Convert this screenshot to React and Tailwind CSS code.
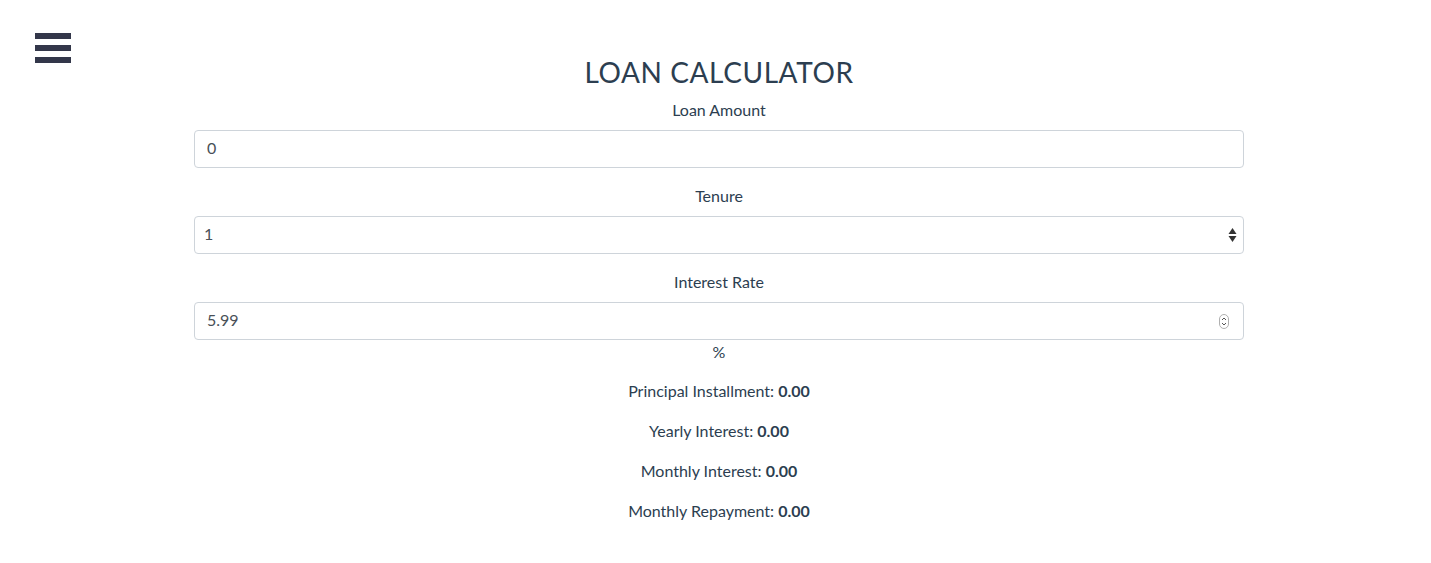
import { useState } from 'react'

function Field({ label, children }) {
  return (
    <div className="flex flex-col items-center mb-4 last:mb-0">
      <label className="mb-2 leading-6">{label}</label>
      {children}
    </div>
  )
}

export default function App() {
  const [amount, setAmount] = useState('0')
  const [tenure, setTenure] = useState('1')
  const [rate, setRate] = useState('5.99')

  const results = [
    ['Principal Installment:', '0.00'],
    ['Yearly Interest:', '0.00'],
    ['Monthly Interest:', '0.00'],
    ['Monthly Repayment:', '0.00'],
  ]

  return (
    <div className="relative min-h-[563px] bg-white text-[#2c3e50] text-base" style={{ fontFamily: 'Lato, "Open Sans", sans-serif' }}>
      {/* menu toggle */}
      <button className="absolute left-[35px] top-[33px] flex flex-col gap-[6px]">
        <span className="block w-[36px] h-[6px] bg-[#33374a]" />
        <span className="block w-[36px] h-[6px] bg-[#33374a]" />
        <span className="block w-[36px] h-[6px] bg-[#33374a]" />
      </button>

      <div className="pl-[7px] pt-[55px] flex flex-col items-center">
        <h1 className="text-[28px] leading-[34px] mb-[9px] tracking-[0.6px]">LOAN CALCULATOR</h1>

        <div className="w-[1050px] flex flex-col">
          <Field label="Loan Amount">
            <input
              type="text"
              value={amount}
              onChange={(e) => setAmount(e.target.value)}
              className="w-full h-[38px] px-3 pb-[3px] border border-[#ced4da] rounded-[4px] text-[#495057] outline-none"
            />
          </Field>
          <Field label="Tenure">
            <div className="relative w-full">
              <select
                value={tenure}
                onChange={(e) => setTenure(e.target.value)}
                className="appearance-none w-full h-[38px] pl-[9px] pr-8 pb-[2px] border border-[#ced4da] rounded-[4px] text-[#495057] bg-white outline-none"
              >
                {[1, 2, 3, 4, 5].map(n => <option key={n} value={n}>{n}</option>)}
              </select>
              <svg className="absolute right-[7px] top-[11px] pointer-events-none" width="9" height="16" viewBox="0 0 9 16">
                <path d="M4.5 1 L8.5 7 L0.5 7 Z" fill="#333" />
                <path d="M4.5 15 L8.5 9 L0.5 9 Z" fill="#333" />
              </svg>
            </div>
          </Field>
          <Field label="Interest Rate">
            <div className="relative w-full">
              <input
                type="text"
                value={rate}
                onChange={(e) => setRate(e.target.value)}
                className="w-full h-[38px] px-3 pr-8 pb-[3px] border border-[#ced4da] rounded-[4px] text-[#495057] outline-none"
              />
              <svg className="absolute right-[15px] top-[12px] pointer-events-none" width="10" height="15" viewBox="0 0 10 15">
                <rect x="0.5" y="0.5" width="9" height="14" rx="4.5" fill="#fff" stroke="#b0b0b0" />
                <path d="M3 6 L5 4 L7 6" fill="none" stroke="#555" strokeWidth="1" />
                <path d="M3 9 L5 11 L7 9" fill="none" stroke="#555" strokeWidth="1" />
              </svg>
            </div>
            <span className="leading-6">%</span>
          </Field>
        </div>

        <div className="mt-[15px] flex flex-col items-center">
          {results.map(([k, v]) => (
            <p key={k} className="leading-6 mb-4">
              {k} <b className="font-bold">{v}</b>
            </p>
          ))}
        </div>
      </div>
    </div>
  )
}
